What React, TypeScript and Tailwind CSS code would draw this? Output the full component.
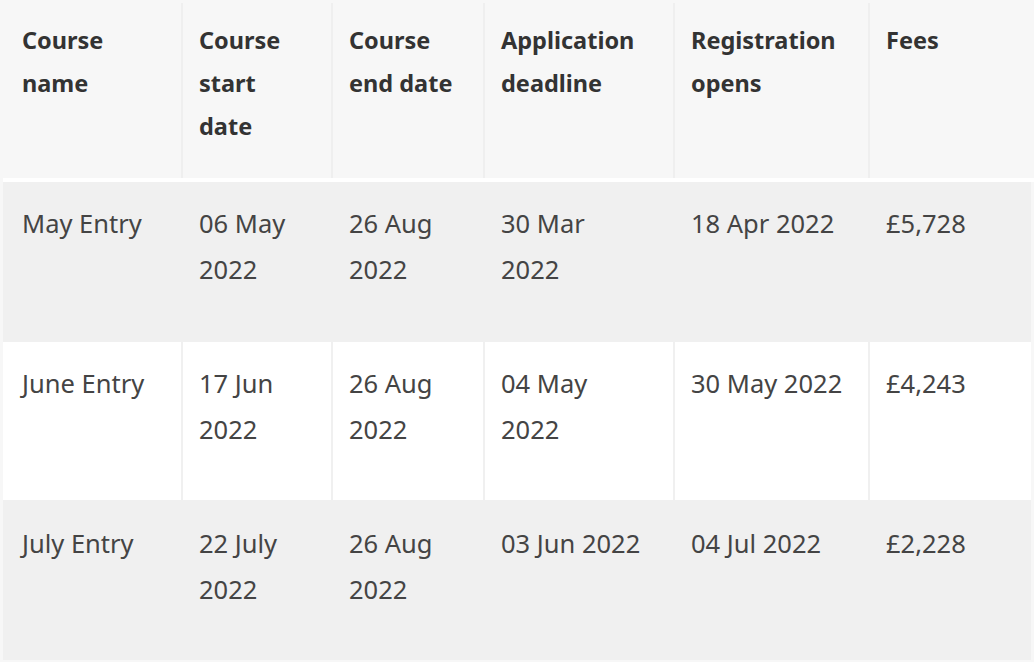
import React from 'react';

// lines are split as in the original layout
const headers: string[][] = [
    ['Course', 'name'],
    ['Course', 'start', 'date'],
    ['Course', 'end date'],
    ['Application', 'deadline'],
    ['Registration', 'opens'],
    ['Fees'],
];

const rows: string[][][] = [
    [['May Entry'], ['06 May', '2022'], ['26 Aug', '2022'], ['30 Mar', '2022'], ['18 Apr 2022'], ['£5,728']],
    [['June Entry'], ['17 Jun', '2022'], ['26 Aug', '2022'], ['04 May', '2022'], ['30 May 2022'], ['£4,243']],
    [['July Entry'], ['22 July', '2022'], ['26 Aug', '2022'], ['03 Jun 2022'], ['04 Jul 2022'], ['£2,228']],
];

const cols = 'grid grid-cols-[178px_148px_150px_188px_193px_161px] gap-x-[2px]';

const App: React.FC = () => {
    return (
        <div className="w-[1034px] h-[662px] overflow-hidden bg-[#f7f7f7] pt-[3px] pl-[3px] font-['Noto_Sans',sans-serif]">
            {/* header */}
            <div className={`${cols} bg-[#efefef] w-max`}>
                {headers.map((h, i) => (
                    <div
                        key={i}
                        className={`bg-[#f7f7f7] h-[175px] pt-[16px] text-[23.5px] leading-[43px] font-bold text-[#333] whitespace-nowrap ${i === 0 ? 'pl-[19px]' : 'pl-[16px]'}`}
                    >
                        {h.map(line => <div key={line}>{line}</div>)}
                    </div>
                ))}
            </div>
            <div className="h-[4px] bg-white w-[1031px]" />

            {/* body */}
            <div className="bg-[#f0f0f0] w-max flex flex-col gap-y-[2px]">
                {rows.map((r, idx) => (
                    <div key={idx} className={cols}>
                        {r.map((cell, i) => (
                            <div
                                key={i}
                                className={`h-[158px] pt-[18px] text-[25.5px] leading-[46px] text-[#444] whitespace-nowrap ${idx === 1 ? 'bg-white' : 'bg-[#f0f0f0]'} ${i === 0 ? 'pl-[19px]' : 'pl-[16px]'}`}
                            >
                                {cell.map(line => <div key={line}>{line}</div>)}
                            </div>
                        ))}
                    </div>
                ))}
            </div>
        </div>
    );
};

export default App;
